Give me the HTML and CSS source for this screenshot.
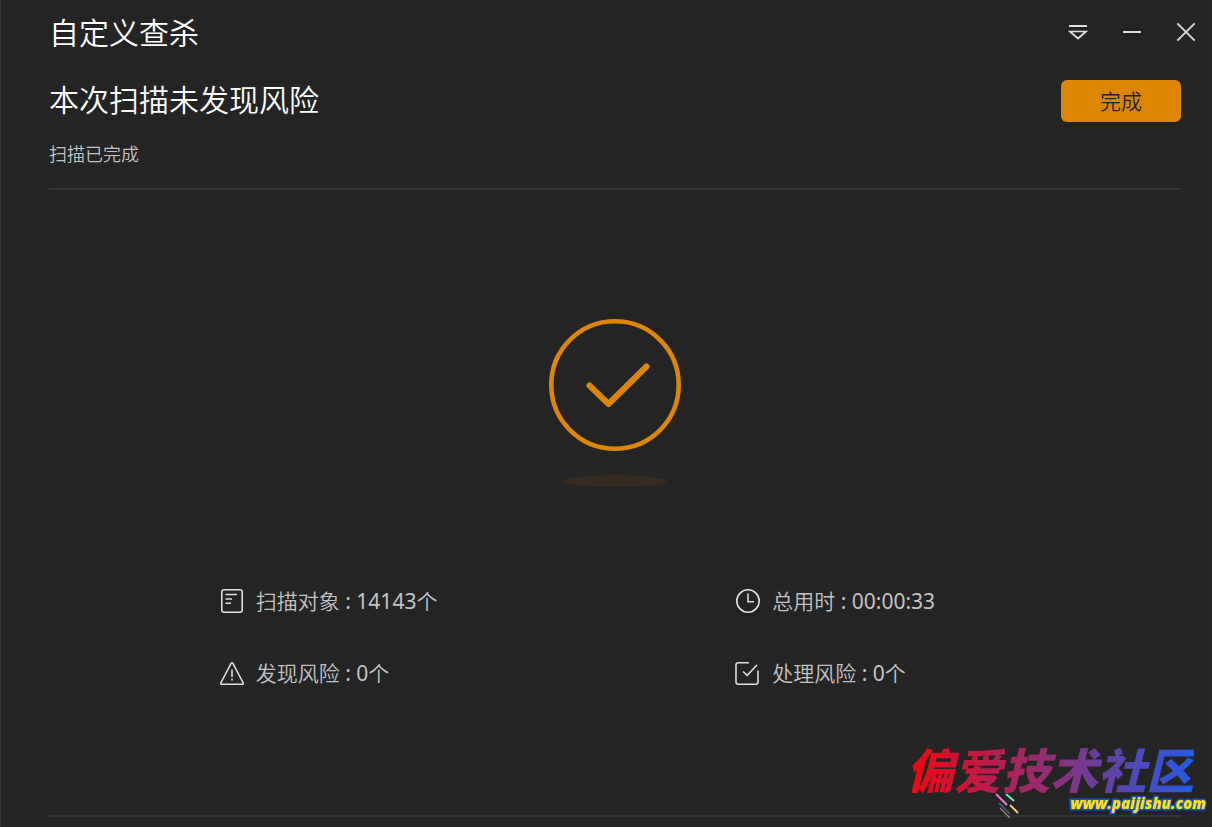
FILE: index.html
```html
<!DOCTYPE html>
<html lang="zh-CN">
<head>
<meta charset="utf-8">
<meta name="viewport" content="width=device-width, initial-scale=1">
<title>自定义查杀</title>
<link rel="stylesheet" href="styles.css">
</head>
<body>
<div class="window">
  <header class="titlebar">
    <h1 class="title">自定义查杀</h1>
    <div class="controls">
      <button class="control" type="button" aria-label="菜单">
        <svg width="20" height="20" viewBox="0 0 20 20"><path d="M1 4h18" stroke-width="2"/><path d="M2 9.5h16l-8 7z" stroke-width="1.7"/></svg>
      </button>
      <button class="control" type="button" aria-label="最小化">
        <svg width="20" height="20" viewBox="0 0 20 20"><path d="M1 10h18" stroke-width="2"/></svg>
      </button>
      <button class="control" type="button" aria-label="关闭">
        <svg width="20" height="20" viewBox="0 0 20 20"><path d="M1.3 1.3l17.4 17.4M18.7 1.3L1.3 18.7" stroke-width="1.8"/></svg>
      </button>
    </div>
  </header>

  <section class="summary">
    <div class="summary-text">
      <h2 class="result">本次扫描未发现风险</h2>
      <p class="status">扫描已完成</p>
    </div>
    <button class="done" type="button">完成</button>
  </section>

  <main class="content">
    <svg class="hero" width="132" height="168" viewBox="0 0 132 168" role="img" aria-label="扫描完成">
      <circle class="hero-line" cx="66" cy="66" r="63.7" stroke-width="4.6"/>
      <path class="hero-line" d="M40.5 66.5L59.5 85L97.5 47.5" stroke-width="6" stroke-linecap="round" stroke-linejoin="round"/>
      <ellipse class="hero-shadow" cx="66" cy="162" rx="51.5" ry="6"/>
    </svg>
    <ul class="stats">
      <li class="stat">
        <svg class="stat-icon" width="26" height="26" viewBox="0 0 26 26"><rect x="2.8" y="1.8" width="20.4" height="22.4" rx="2.2"/><path d="M6.5 6.5H18M6.5 11H13M6.5 15.3H12"/></svg>
        <span>扫描对象<span class="value"> : 14143</span>个</span>
      </li>
      <li class="stat">
        <svg class="stat-icon" width="26" height="26" viewBox="0 0 26 26"><circle cx="13" cy="13" r="11.2"/><path d="M13 5.5v8.2h6"/></svg>
        <span>总用时<span class="value"> : 00:00:33</span></span>
      </li>
      <li class="stat">
        <svg class="stat-icon" width="26" height="26" viewBox="0 0 26 26"><path d="M12.1 3.4L1.8 23q-.5 1.2.8 1.2h20.8q1.3 0 .8-1.2L13.9 3.4q-.9-1.4-1.8 0z"/><path d="M13 9.5v7.4M13 18.5v2"/></svg>
        <span>发现风险<span class="value"> : 0</span>个</span>
      </li>
      <li class="stat">
        <svg class="stat-icon" width="26" height="26" viewBox="0 0 26 26"><path d="M14 2.8H3.2q-2.2 0-2.2 2.2v17q0 2.2 2.2 2.2h17.6q2.2 0 2.2-2.2V10.5M8 11.5l4.2 3.8L22 5"/></svg>
        <span>处理风险<span class="value"> : 0</span>个</span>
      </li>
    </ul>
  </main>

  <footer class="footer"></footer>

  <aside class="watermark">
    <span class="brand">偏爱技术社区</span>
    <svg class="sparks" width="28" height="28" viewBox="0 0 28 28"><path d="M2 3L13 14" stroke="#ee78df" stroke-width="2"/><path d="M12 3L20 10" stroke="#72e6cf" stroke-width="2"/><path d="M16 14L24 22" stroke="#e9cc7b" stroke-width="2"/><path d="M5 12L16 23" stroke="#5267a0" stroke-width="1.2"/><path d="M6 17L16 27" stroke="#9c8c78" stroke-width="1.2"/></svg>
    <span class="site">www.paijishu.com</span>
  </aside>
</div>
</body>
</html>
```
FILE: styles.css
```css
* {
  box-sizing: border-box;
}

body {
  margin: 0;
  background: #242424;
  color: #c3c3c3;
  font-family: "Noto Sans", "Noto Sans CJK SC", sans-serif;
  font-weight: 350;
}

.window {
  position: relative;
  display: flex;
  flex-direction: column;
  min-height: 100vh;
  padding: 0 31px 10px 48px;
  border-left: 1px solid #333;
}

.titlebar,
.summary {
  display: flex;
  justify-content: space-between;
}

.titlebar {
  align-items: center;
  height: 64px;
  margin-right: -15px;
}

.title,
.result {
  margin: 0;
  color: #fff;
  font-size: 30px;
  line-height: 40px;
  font-weight: 350;
}

.title {
  padding-top: 2px;
}

.controls {
  display: flex;
  gap: 34px;
}

.control {
  display: flex;
  padding: 0;
  border: 0;
  background: none;
}

.control svg {
  fill: none;
  stroke: #ddd;
}

.summary {
  align-items: flex-start;
  padding: 16px 0 20px;
  border-bottom: 2px solid #333;
}

.status {
  margin: 20px 0 0;
  font-size: 18px;
  line-height: 28px;
}

.done {
  width: 120px;
  height: 42px;
  padding: 0 0 2px;
  border: 0;
  border-radius: 6px;
  background: #dd8604;
  color: #242424;
  font: inherit;
  font-size: 21px;
}

.content {
  display: flex;
  flex: 1;
  flex-direction: column;
  padding-top: 129px;
}

.hero {
  align-self: center;
}

.hero-line {
  fill: none;
  stroke: #dd8604;
}

.hero-shadow {
  fill: #352b20;
}

.stats {
  display: grid;
  grid-template-columns: 15fr 13fr;
  gap: 44px 2px;
  margin: 100px 0 0 15%;
  padding: 0;
  list-style: none;
}

.stat {
  display: flex;
  align-items: center;
  gap: 11px;
  font-size: 21px;
  line-height: 28px;
}

.value {
  font-weight: 400;
}

.stat-icon {
  fill: none;
  stroke: #ddd;
  stroke-width: 1.6;
}

.footer {
  border-top: 2px solid #333;
}

.watermark {
  position: absolute;
  right: 6px;
  bottom: 14px;
  width: 300px;
  height: 70px;
}

.brand {
  position: absolute;
  top: 0;
  left: 0;
  background: linear-gradient(90deg, #f5040d, #8f2f76 50%, #225be6);
  background-clip: text;
  -webkit-background-clip: text;
  color: transparent;
  font-family: "Noto Sans CJK SC", sans-serif;
  font-size: 48px;
  font-style: italic;
  font-weight: 900;
  line-height: 50px;
}

.sparks {
  position: absolute;
  top: 48px;
  left: 88px;
}

.site {
  position: absolute;
  right: 0;
  bottom: 0;
  color: #ffe20a;
  font-family: "Open Sans", sans-serif;
  font-size: 15px;
  font-style: italic;
  font-weight: 800;
  line-height: 20px;
  -webkit-text-stroke: 3px #1552ce;
  paint-order: stroke fill;
}
```
